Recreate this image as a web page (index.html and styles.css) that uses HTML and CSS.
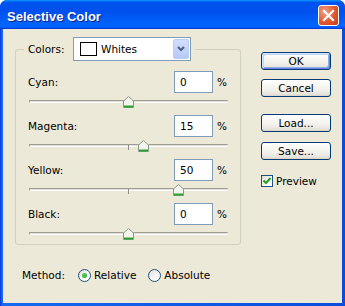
FILE: index.html
```html
<!DOCTYPE html>
<html lang="en">
<head>
    <meta charset="UTF-8">
    <title>Selective Color</title>
    <link rel="stylesheet" href="styles.css">
</head>
<body>
    <div class="window">
        <div class="titlebar">
            <span class="title">Selective Color</span>
            <span class="close">
                <svg width="21" height="21" viewBox="0 0 21 21"><path d="M6 6 L15 15 M15 6 L6 15" stroke="#fff" stroke-width="2.2" stroke-linecap="square"/></svg>
            </span>
        </div>
        <div class="client">
            <div class="main">
                <fieldset class="group">
                    <legend class="group-legend">
                        <span class="group-head">
                            <span class="colors-label">Colors:</span>
                            <span class="combo">
                                <span class="swatch"></span>
                                <span class="combo-text">Whites</span>
                                <span class="combo-btn">
                                    <svg width="8" height="6" viewBox="0 0 8 6"><path d="M1 1 L4 4 L7 1" fill="none" stroke="#4d6185" stroke-width="2"/></svg>
                                </span>
                            </span>
                        </span>
                    </legend>

                    <div class="control">
                        <div class="control-row"><span class="name">Cyan:</span><span class="field">0</span><span class="pct">%</span></div>
                        <div class="slider">
                            <div class="track"></div>
                            <span class="tick"></span>
                            <svg class="thumb" style="left: 50%" width="11" height="12" viewBox="0 0 11 12"><path d="M5.5 0.5 L10.5 5 V11.5 H0.5 V5 Z" fill="#f4f4ef" stroke="#8b9a8b"/><path d="M1 10.5 H10" stroke="#2ea12e" stroke-width="2"/></svg>
                        </div>
                    </div>

                    <div class="control">
                        <div class="control-row"><span class="name">Magenta:</span><span class="field">15</span><span class="pct">%</span></div>
                        <div class="slider">
                            <div class="track"></div>
                            <span class="tick"></span>
                            <svg class="thumb" style="left: 57.5%" width="11" height="12" viewBox="0 0 11 12"><path d="M5.5 0.5 L10.5 5 V11.5 H0.5 V5 Z" fill="#f4f4ef" stroke="#8b9a8b"/><path d="M1 10.5 H10" stroke="#2ea12e" stroke-width="2"/></svg>
                        </div>
                    </div>

                    <div class="control">
                        <div class="control-row"><span class="name">Yellow:</span><span class="field">50</span><span class="pct">%</span></div>
                        <div class="slider">
                            <div class="track"></div>
                            <span class="tick"></span>
                            <svg class="thumb" style="left: 75%" width="11" height="12" viewBox="0 0 11 12"><path d="M5.5 0.5 L10.5 5 V11.5 H0.5 V5 Z" fill="#f4f4ef" stroke="#8b9a8b"/><path d="M1 10.5 H10" stroke="#2ea12e" stroke-width="2"/></svg>
                        </div>
                    </div>

                    <div class="control">
                        <div class="control-row"><span class="name">Black:</span><span class="field">0</span><span class="pct">%</span></div>
                        <div class="slider">
                            <div class="track"></div>
                            <span class="tick"></span>
                            <svg class="thumb" style="left: 50%" width="11" height="12" viewBox="0 0 11 12"><path d="M5.5 0.5 L10.5 5 V11.5 H0.5 V5 Z" fill="#f4f4ef" stroke="#8b9a8b"/><path d="M1 10.5 H10" stroke="#2ea12e" stroke-width="2"/></svg>
                        </div>
                    </div>
                </fieldset>

                <div class="method">
                    <span class="method-label">Method:</span>
                    <span class="radio checked"></span><span class="radio-text">Relative</span>
                    <span class="radio"></span><span class="radio-text">Absolute</span>
                </div>
            </div>

            <div class="side">
                <div class="btn default">OK</div>
                <div class="btn">Cancel</div>
                <div class="btn gap-top">Load...</div>
                <div class="btn">Save...</div>
                <div class="check-row">
                    <span class="checkbox">
                        <svg width="10" height="10" viewBox="0 0 10 10"><path d="M1.5 4.5 L4 7 L8.5 2" fill="none" stroke="#21a121" stroke-width="2"/></svg>
                    </span>
                    <span>Preview</span>
                </div>
            </div>
        </div>
    </div>
</body>
</html>
```

FILE: styles.css
```css
body {
    margin: 0;
    font-family: "DejaVu Sans", Verdana, sans-serif;
    font-size: 10.5px;
    color: #000;
    background: #fff;
}
.window {
    width: 345px;
    height: 306px;
    box-sizing: border-box;
    padding: 0 3px 3px;
    background: linear-gradient(90deg, #0831d9, #166aee 2px, #0a4ddc);
    border-radius: 7px 7px 0 0;
    display: flex;
    flex-direction: column;
}
.titlebar {
    height: 29px;
    box-sizing: border-box;
    margin: 0 -3px;
    padding: 2px 6px 0 7px;
    display: flex;
    align-items: center;
    justify-content: space-between;
    border-radius: 7px 7px 0 0;
    background: linear-gradient(180deg, #0997ff, #0053ee 8%, #0050ee 40%, #0066ff 88%, #005bff 95%, #003dd7 96%, #003dd7);
}
.title {
    font: bold 13px "Liberation Sans", Arial, sans-serif;
    color: #fff;
    text-shadow: 1px 1px 0 #0a1e8c;
    padding-top: 1px;
}
.close {
    width: 21px;
    height: 21px;
    box-sizing: border-box;
    border: 1px solid #fff;
    border-radius: 3px;
    background: radial-gradient(circle at 30% 30%, #f0a085, #e0582f 55%, #c73a14);
    display: flex;
    align-items: center;
    justify-content: center;
}
.close svg {
    margin: -1px;
}
.client {
    flex: 1;
    background: #ece9d8;
    display: flex;
}
.main {
    margin-left: 12px;
    padding-top: 8px;
    width: 226px;
}
.group {
    margin: 0;
    min-width: 0;
    box-sizing: border-box;
    width: 226px;
    padding: 10px 12px 3px;
    border: 1px solid #d0d0bf;
    border-radius: 3px;
}
.group-legend {
    padding: 0 4px;
    margin-left: -4px;
}
.group-head {
    display: flex;
    align-items: center;
}
.colors-label {
    width: 45px;
}
.combo {
    width: 118px;
    height: 24px;
    box-sizing: border-box;
    border: 1px solid #7f9db9;
    background: #fff;
    display: flex;
    align-items: center;
    padding: 0 1px 0 6px;
}
.swatch {
    width: 17px;
    height: 14px;
    box-sizing: border-box;
    border: 1px solid #000;
    background: #fff;
}
.combo-text {
    flex: 1;
    margin-left: 4px;
}
.combo-btn {
    width: 16px;
    height: 20px;
    box-sizing: border-box;
    border: 1px solid #bccdf5;
    border-radius: 2px;
    background: linear-gradient(180deg, #d2defb, #b6c8f5);
    display: flex;
    align-items: center;
    justify-content: center;
}
.control {
    margin-bottom: 6px;
}
.control:last-child {
    margin-bottom: 0;
}
.control-row {
    display: flex;
    align-items: center;
    height: 22px;
}
.name {
    flex: 1;
}
.field {
    width: 39px;
    height: 22px;
    box-sizing: border-box;
    border: 1px solid #7f9db9;
    background: #fff;
    padding-left: 5px;
    line-height: 20px;
}
.pct {
    width: 11px;
    margin-left: 4px;
}
.slider {
    position: relative;
    height: 16px;
}
.track {
    position: relative;
    top: 7px;
    margin-left: 1px;
    height: 3px;
    box-sizing: border-box;
    border-top: 1px solid #9d9d93;
    border-bottom: 1px solid #fff;
    border-left: 1px solid #9d9d93;
    background: #e4e2d6;
    border-radius: 1px;
}
.tick {
    position: absolute;
    left: 50%;
    top: 8px;
    width: 1px;
    height: 5px;
    background: #8e8e86;
}
.thumb {
    position: absolute;
    top: 3px;
    margin-left: -5px;
}
.method {
    margin-top: 23px;
    padding-left: 7px;
    height: 14px;
    display: flex;
    align-items: center;
}
.method-label {
    width: 56px;
}
.radio {
    width: 13px;
    height: 13px;
    box-sizing: border-box;
    border: 1px solid #1c5180;
    border-radius: 50%;
    background: linear-gradient(135deg, #dcdcd5, #fff 70%);
    display: flex;
    align-items: center;
    justify-content: center;
}
.radio.checked::after {
    content: "";
    width: 5px;
    height: 5px;
    border-radius: 50%;
    background: radial-gradient(circle at 40% 40%, #5fd35f, #21a121);
}
.radio-text {
    margin-left: 3px;
    margin-right: 12px;
}
.side {
    margin-left: 20px;
    padding-top: 23px;
    width: 70px;
    display: flex;
    flex-direction: column;
}
.btn {
    height: 18px;
    box-sizing: border-box;
    border: 1px solid #003c74;
    border-radius: 3px;
    background: linear-gradient(180deg, #fff, #f2f1ec 60%, #e6e3da 90%, #d6d0c5);
    display: flex;
    align-items: center;
    justify-content: center;
    margin-bottom: 10px;
}
.btn.default {
    margin-bottom: 9px;
    box-shadow: inset 1px 1px 0 #cee7ff, inset -1px -1px 0 #6982ee, inset 2px 2px 0 #bcd4f6, inset -2px -2px 0 #89ade4;
}
.btn.gap-top {
    margin-top: 7px;
}
.check-row {
    margin-top: 5px;
    display: flex;
    align-items: center;
}
.checkbox {
    width: 12px;
    height: 12px;
    box-sizing: border-box;
    border: 1px solid #1c5180;
    background: linear-gradient(135deg, #dcdcd5, #fff 70%);
    display: flex;
    align-items: center;
    justify-content: center;
    margin-right: 3px;
}
```
